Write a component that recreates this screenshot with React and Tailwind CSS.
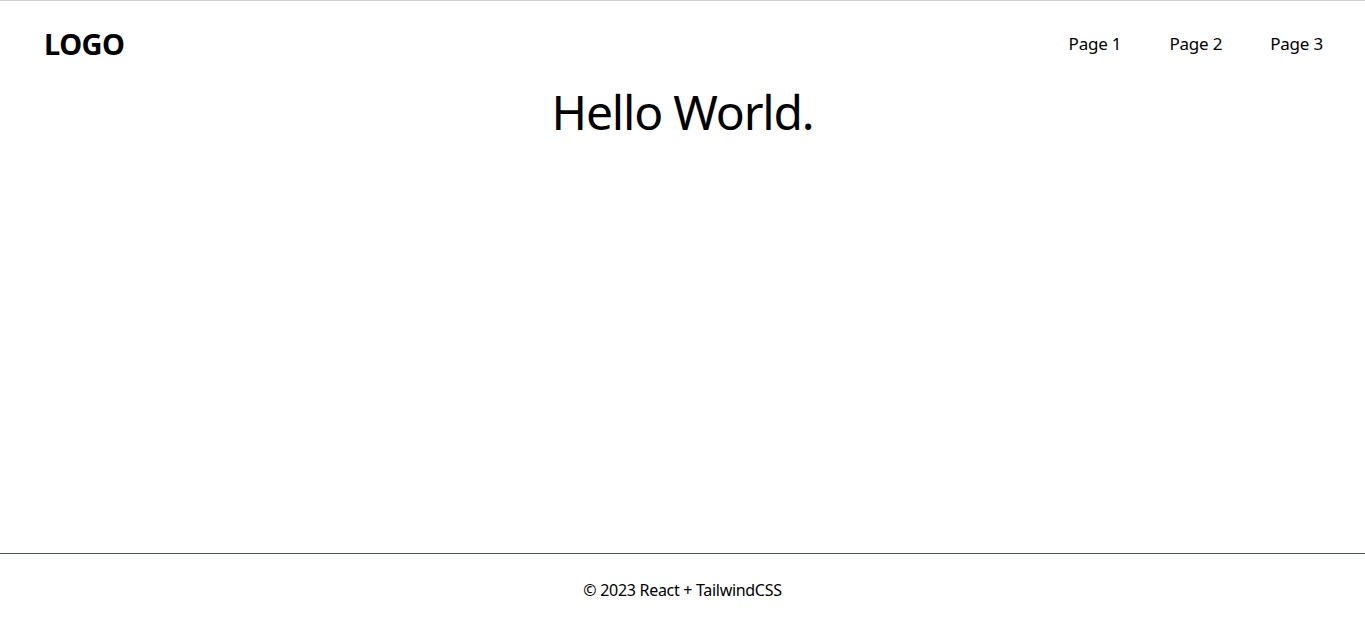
export default function App() {
  return (
    <div className="flex min-h-[626px] flex-col border-t border-[#cccccc] bg-white text-black" style={{ fontFamily: '"Noto Sans", "Open Sans", sans-serif' }}>
      <header className="flex h-[86px] items-center justify-between pl-[44px] pr-[42px]">
        <div className="text-[29px] font-bold tracking-[-0.5px]">LOGO</div>
        <nav className="flex gap-[48px] text-[17px] tracking-[-0.2px]">
          <a href="#">Page 1</a>
          <a href="#">Page 2</a>
          <a href="#">Page 3</a>
        </nav>
      </header>
      <main className="flex-1">
        <h1 className="pt-px text-center text-5xl leading-none tracking-[-1.2px]">Hello World.</h1>
      </main>
      <footer className="flex h-[73px] items-center justify-center border-t border-[#4b5563] pb-px text-base tracking-[-0.3px]">
        © 2023 React + TailwindCSS
      </footer>
    </div>
  );
}
